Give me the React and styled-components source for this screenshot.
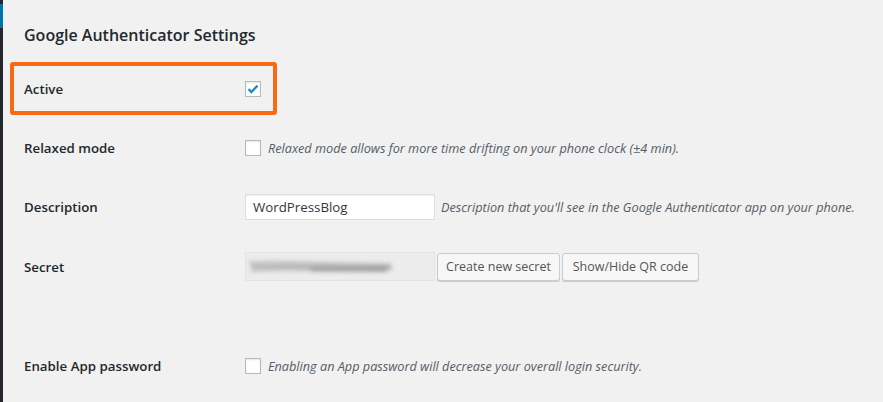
import React from "react";
import styled, { createGlobalStyle } from "styled-components";

const Global = createGlobalStyle`
  html, body { margin: 0; padding: 0; background: #f1f1f1; }
  body { font-family: "Open Sans", "Noto Sans", sans-serif; color: #23282d; }
  * { box-sizing: border-box; }
`;

const Page = styled.div`
  display: flex;
  width: 883px;
  height: 402px;
  overflow: hidden;
  background: #f1f1f1;
`;

const Sidebar = styled.div`
  width: 3px;
  flex: none;
  background: #23282d;
  display: flex;
  flex-direction: column;
`;

const SidebarActive = styled.div`
  margin-top: 4px;
  height: 24px;
  background: #0073aa;
`;

const Content = styled.div`
  flex: 1;
  padding-left: 21px;
  display: flex;
  flex-direction: column;
`;

const Title = styled.h2`
  margin: 0;
  height: 62px;
  padding-top: 24px;
  font-size: 16px;
  line-height: 23px;
  font-weight: 600;
  color: #23282d;
`;

const Row = styled.div`
  display: flex;
  align-items: center;
  height: ${(p) => p.$h}px;
`;

const Highlight = styled.div`
  display: flex;
  align-items: center;
  height: 53px;
  width: 267px;
  margin-left: -14px;
  padding-left: 10px;
  border: 4px solid #f86a12;
  border-radius: 3px;
`;

const Label = styled.div`
  width: ${(p) => p.$w || 221}px;
  flex: none;
  font-size: 13.3px;
  font-weight: 600;
  color: #23282d;
`;

const Spacer = styled.div`
  height: 40px;
`;

const Box = styled.span`
  width: 16px;
  height: 16px;
  flex: none;
  border: 1px solid #b4b9be;
  background: #fff;
  box-shadow: inset 0 1px 2px rgba(0, 0, 0, 0.1);
  display: inline-flex;
  align-items: center;
  justify-content: center;
  margin-right: 7px;
`;

const Desc = styled.span`
  font-style: italic;
  font-size: 12.7px;
  color: #555d66;
  white-space: nowrap;
`;

const TextInput = styled.div`
  width: 190px;
  height: 26px;
  background: #fff;
  border: 1px solid #ddd;
  box-shadow: inset 0 1px 2px rgba(0, 0, 0, 0.07);
  font-size: 13.3px;
  line-height: 24px;
  padding-left: 7px;
  color: #32373c;
  margin-right: 6px;
  flex: none;
`;

const SecretInput = styled.div`
  width: 190px;
  height: 29px;
  background: #ececec;
  border: 1px solid #e4e4e4;
  flex: none;
  margin-right: 2px;
  overflow: hidden;
`;

const Button = styled.div`
  height: 28px;
  padding: 0;
  background: #f7f7f7;
  border: 1px solid #cccccc;
  border-radius: 3px;
  box-shadow: 0 1px 0 #cccccc;
  font-size: 12.5px;
  line-height: 26px;
  color: #555;
  margin-right: 2px;
  width: ${(p) => p.$w}px;
  text-align: center;
  white-space: nowrap;
  flex: none;
`;

const Check = () => (
  <svg width="14" height="14" viewBox="0 0 14 14">
    <path d="M2.5 7.2 L5.4 10 L11.5 3.6" fill="none" stroke="#1e8cbe" strokeWidth="2.4" strokeLinecap="butt" />
  </svg>
);

const Scribble = () => (
  <svg width="190" height="29" viewBox="0 0 190 29">
    <defs>
      <filter id="bl" x="-20%" y="-100%" width="140%" height="300%">
        <feGaussianBlur stdDeviation="2" />
      </filter>
    </defs>
    <g filter="url(#bl)">
      <path d="M3 10 Q30 9 60 10 L145 12" stroke="#b4b4b4" strokeWidth="2.5" fill="none" />
      <path d="M5 14 Q40 13 70 14 L146 15" stroke="#a8a8a8" strokeWidth="3" fill="none" />
      <path d="M5 18 Q30 16 60 17 L142 18" stroke="#b8b8b8" strokeWidth="2" fill="none" />
      <path d="M65 16 L140 16" stroke="#a0a0a0" strokeWidth="5" fill="none" />
    </g>
  </svg>
);

export default function App() {
  return (
    <>
      <Global />
      <Page>
        <Sidebar>
          <SidebarActive />
        </Sidebar>
        <Content>
          <Title>Google Authenticator Settings</Title>
          <Highlight>
            <Label $w={221}>Active</Label>
            <Box>
              <Check />
            </Box>
          </Highlight>
          <Row $h={66}>
            <Label>Relaxed mode</Label>
            <Box />
            <Desc>Relaxed mode allows for more time drifting on your phone clock (±4 min).</Desc>
          </Row>
          <Row $h={52}>
            <Label>Description</Label>
            <TextInput>WordPressBlog</TextInput>
            <Desc>Description that you'll see in the Google Authenticator app on your phone.</Desc>
          </Row>
          <Row $h={67}>
            <Label>Secret</Label>
            <SecretInput>
              <Scribble />
            </SecretInput>
            <Button $w={123}>Create new secret</Button>
            <Button $w={137}>Show/Hide QR code</Button>
          </Row>
          <Spacer />
          <Row $h={52}>
            <Label>Enable App password</Label>
            <Box />
            <Desc>Enabling an App password will decrease your overall login security.</Desc>
          </Row>
        </Content>
      </Page>
    </>
  );
}
